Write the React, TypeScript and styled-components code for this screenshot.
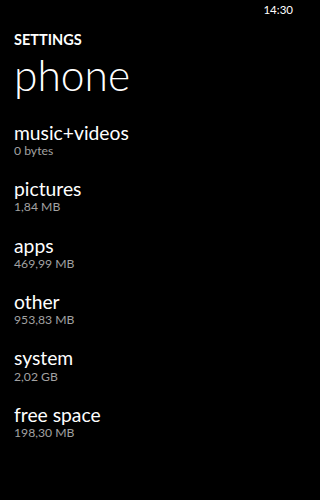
import React from 'react'
import styled, { createGlobalStyle } from 'styled-components'

const GlobalStyle = createGlobalStyle`
  html, body {
    margin: 0;
    padding: 0;
    background: #000;
  }
  body {
    font-family: Lato, 'Open Sans', sans-serif;
    color: #fff;
  }
`

const Screen = styled.div`
  width: 300px;
  height: 500px;
  background: #000;
  overflow: hidden;
`

const StatusBar = styled.div`
  display: flex;
  justify-content: flex-end;
  padding: 2.7px 7px 0 0;
  font-size: 11.5px;
  line-height: 14px;
`

const Header = styled.div`
  padding: 14.2px 0 0 14px;
`

const AppTitle = styled.div`
  font-size: 14.5px;
  line-height: 17px;
  font-weight: 700;
`

const PageTitle = styled.div`
  margin-top: 4.6px;
  font-size: 42.5px;
  line-height: 46px;
  font-weight: 300;
`

const List = styled.div`
  display: flex;
  flex-direction: column;
  gap: 18.9px;
  padding: 22.3px 0 0 14px;
`

const Item = styled.div`
  display: flex;
  flex-direction: column;
`

const ItemTitle = styled.div`
  font-size: 19.3px;
  line-height: 23.2px;
  font-weight: 400;
`

const ItemValue = styled.div`
  font-size: 12.2px;
  line-height: 14.3px;
  color: #a2a2a2;
`

const items = [
  { title: 'music+videos', value: '0 bytes' },
  { title: 'pictures', value: '1,84 MB' },
  { title: 'apps', value: '469,99 MB' },
  { title: 'other', value: '953,83 MB' },
  { title: 'system', value: '2,02 GB' },
  { title: 'free space', value: '198,30 MB' },
]

const App = () => {
  return (
    <Screen>
      <GlobalStyle />
      <StatusBar>14:30</StatusBar>
      <Header>
        <AppTitle>SETTINGS</AppTitle>
        <PageTitle>phone</PageTitle>
      </Header>
      <List>
        {items.map((item) => (
          <Item key={item.title}>
            <ItemTitle>{item.title}</ItemTitle>
            <ItemValue>{item.value}</ItemValue>
          </Item>
        ))}
      </List>
    </Screen>
  )
}

export default App
